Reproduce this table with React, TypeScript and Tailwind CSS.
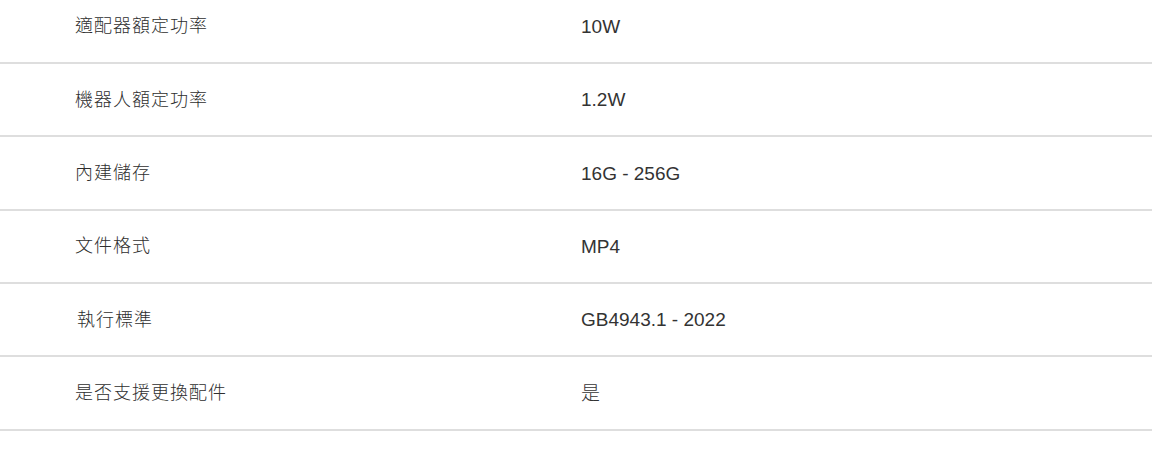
import React from "react";

const rows: [string, string][] = [
  ["適配器額定功率", "10W"],
  ["機器人額定功率", "1.2W"],
  ["內建儲存", "16G - 256G"],
  ["文件格式", "MP4"],
  ["執行標準", "GB4943.1 - 2022"],
  ["是否支援更換配件", "是"],
];

export default function App() {
  return (
    <div
      className="w-[1152px] h-[466px] overflow-hidden bg-white text-[#333]"
      style={{ fontFamily: '"Liberation Sans", "Noto Sans CJK TC", sans-serif' }}
    >
      <div className="mt-[-9.3px]">
        {rows.map(([k, v], i) => (
          <div
            key={k}
            className="grid grid-cols-[581px_1fr] items-center h-[73.33px] border-b-2 border-[#dedede]"
          >
            <div
              className={`${i === 4 ? "pl-[77px]" : "pl-[75px]"} text-[18px] tracking-[1px] leading-none font-light text-[#2e2e2e]`}
            >
              {k}
            </div>
            <div className="text-[19px] leading-none text-[#333] font-light">{v}</div>
          </div>
        ))}
      </div>
    </div>
  );
}
